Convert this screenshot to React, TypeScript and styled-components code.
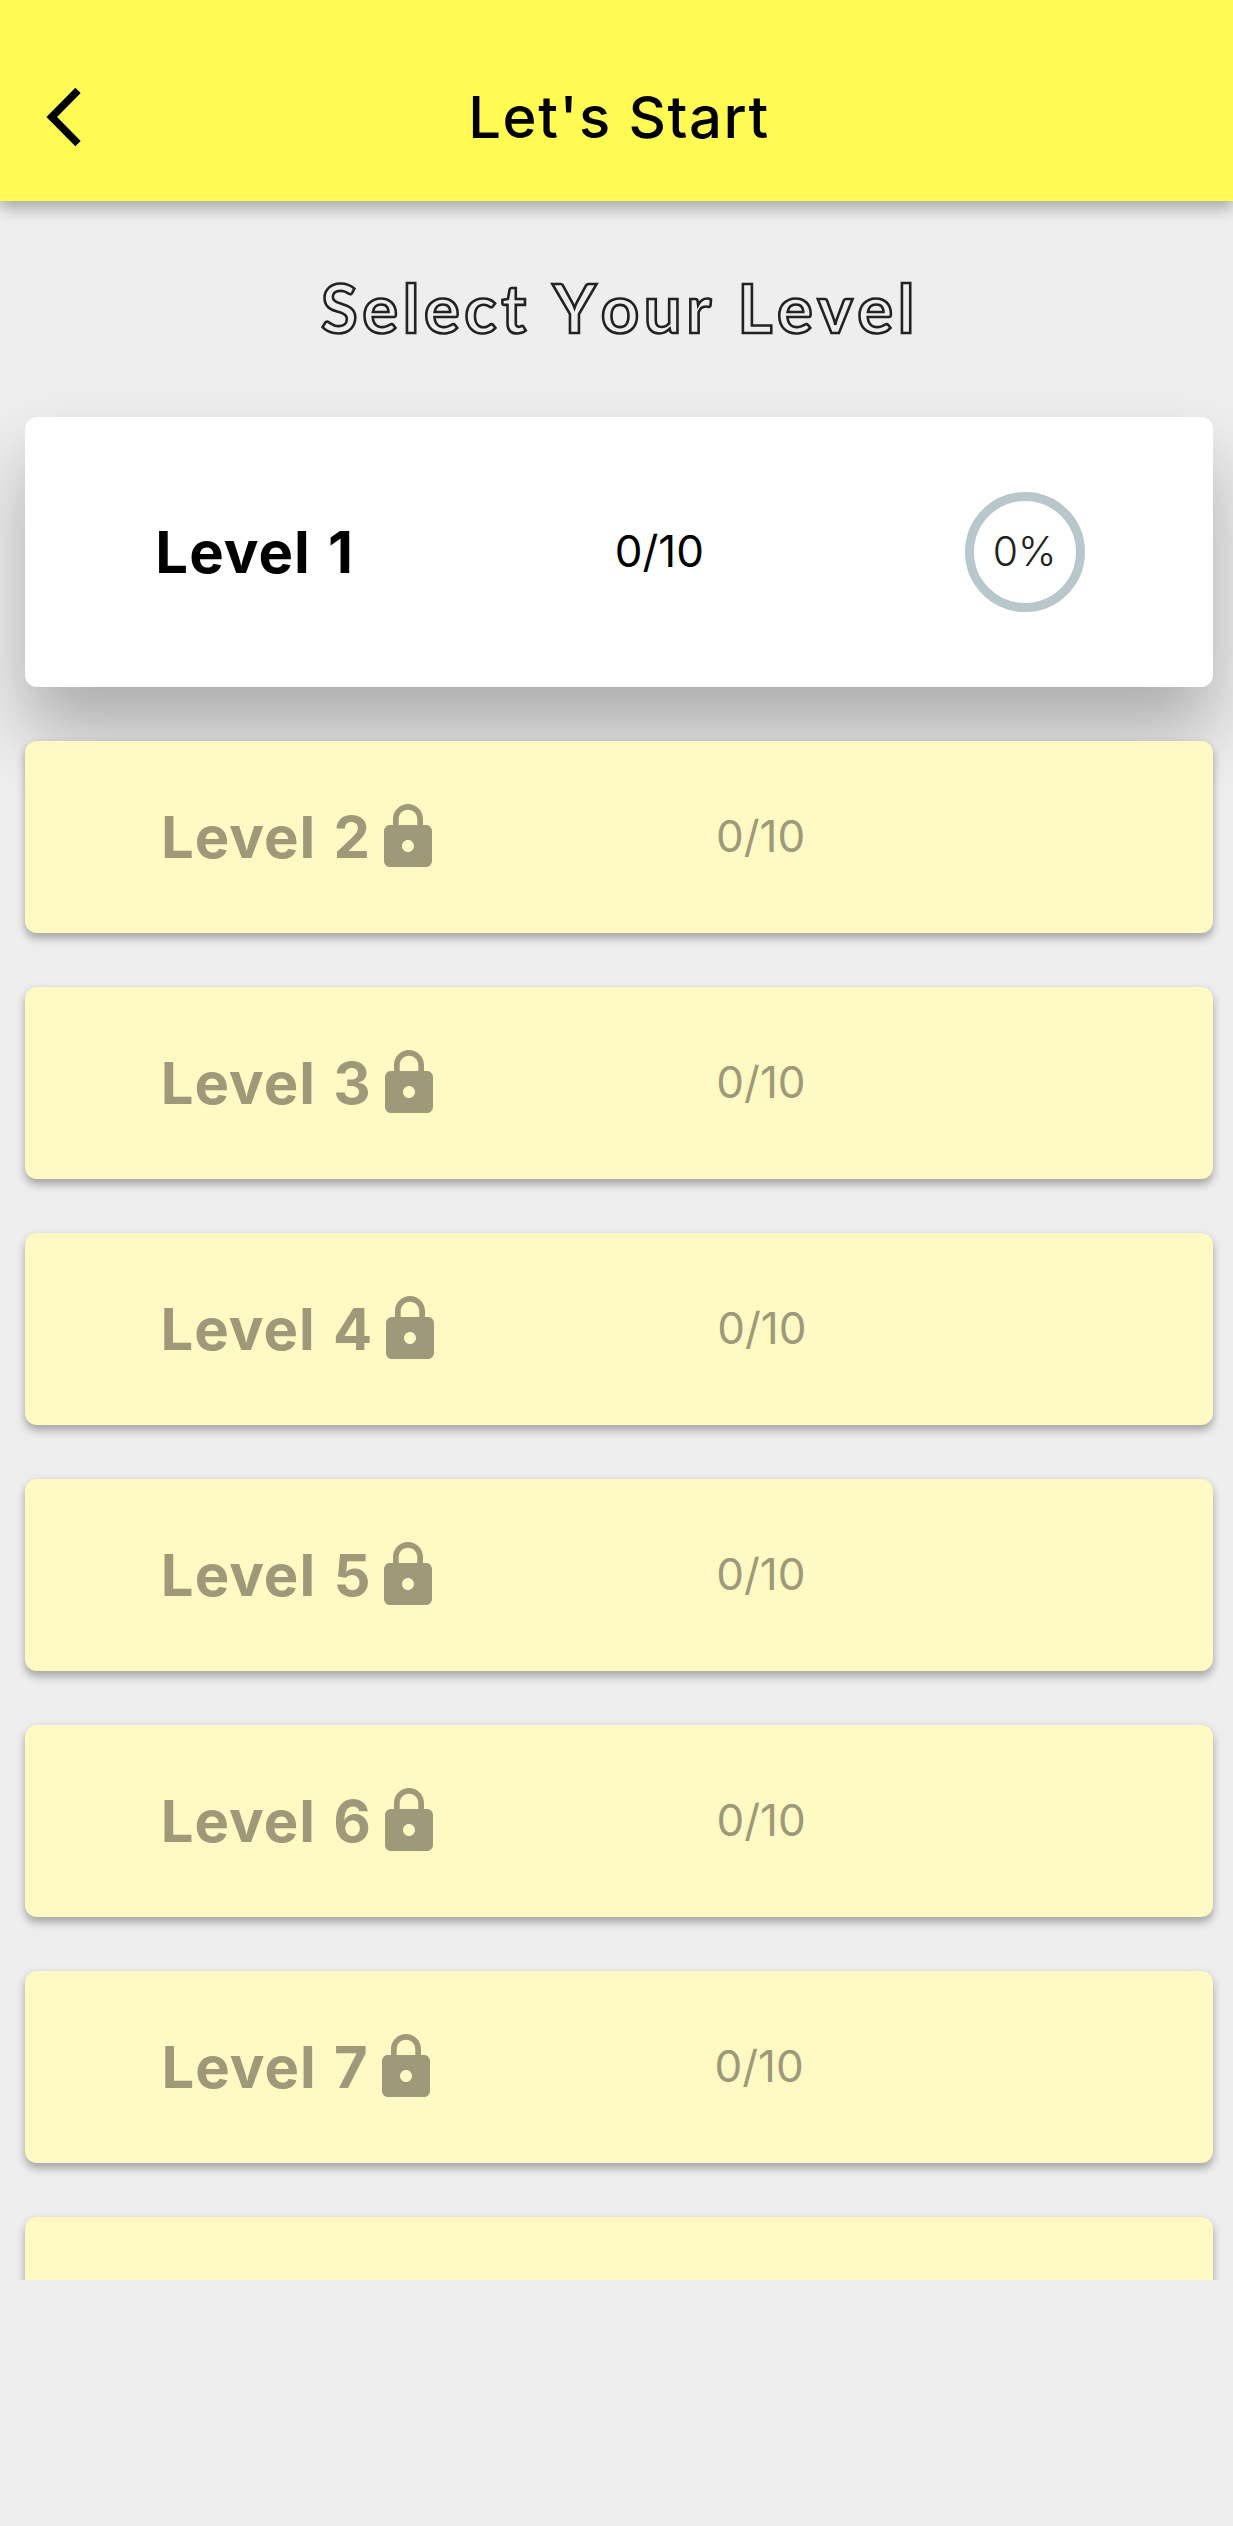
import React from "react";
import styled, { createGlobalStyle } from "styled-components";

const GlobalStyle = createGlobalStyle`
  *, *::before, *::after { box-sizing: border-box; }
  body { margin: 0; background: #eeeeee; font-family: Inter, "Liberation Sans", sans-serif; }
`;

const Screen = styled.div`
  height: 2526px;
  display: flex;
  flex-direction: column;
  overflow: hidden;
  background: #eeeeee;
`;

const AppBar = styled.header`
  flex: none;
  height: 201px;
  padding: 33px 31px 0 36px;
  display: grid;
  grid-template-columns: 60px 1fr 60px;
  align-items: center;
  background: #fffb52;
  box-shadow: 0 8px 14px rgba(0, 0, 0, 0.24), 0 2px 18px rgba(0, 0, 0, 0.08);
`;

const BackButton = styled.button`
  border: 0;
  padding: 0;
  background: none;
  display: flex;
  color: #000;
`;

const Title = styled.h1`
  margin: 0;
  text-align: center;
  font-size: 58px;
  line-height: 70px;
  font-weight: 500;
  letter-spacing: 1.5px;
  color: #000;
`;

const Heading = styled.h2`
  flex: none;
  margin: 0;
  height: 216px;
  padding: 56px 0 0 7px;
  text-align: center;
  font-family: Lato, "Open Sans", sans-serif;
  font-size: 67px;
  line-height: 100px;
  font-weight: 700;
  font-kerning: none;
  letter-spacing: 4.6px;
  word-spacing: 1px;
  color: #eeeeee;
  -webkit-text-stroke: 2.6px #222;
`;

const Levels = styled.main`
  flex: none;
  height: 1863px;
  padding: 0 20px 0 25px;
  display: flex;
  flex-direction: column;
  gap: 54px;
  clip-path: inset(-100px 0 0 0);
`;

const Card = styled.section<{ $open?: boolean }>`
  flex: none;
  height: ${(p) => (p.$open ? 270 : 192)}px;
  display: flex;
  align-items: center;
  justify-content: space-around;
  border-radius: 12px;
  background: ${(p) => (p.$open ? "#ffffff" : "#fff9c4")};
  color: ${(p) => (p.$open ? "#000000" : "#9e9a79")};
  box-shadow: ${(p) =>
    p.$open
      ? "0 44px 72px rgba(0,0,0,0.28)"
      : "0 6px 9px rgba(0,0,0,0.26), 0 1px 10px rgba(0,0,0,0.08)"};
`;

const Name = styled.div`
  display: flex;
  align-items: center;
  gap: 1px;
  font-size: 58px;
  line-height: 70px;
  font-weight: 700;
  letter-spacing: 1px;
  word-spacing: 2.5px;
  white-space: pre;
`;

const Score = styled.div`
  padding-bottom: 2px;
  font-size: 44px;
  line-height: 54px;
`;

const Progress = styled.div`
  display: flex;
`;

const Ring = styled.div`
  width: 120px;
  height: 120px;
  margin-right: -2px;
  border: 9px solid #b8c7cb;
  border-radius: 50%;
  display: flex;
  align-items: center;
  justify-content: center;
  padding-bottom: 2px;
  color: #222;
  font-size: 41px;
  font-weight: 300;
`;

const BackIcon = () => (
  <svg width="60" height="60" viewBox="0 0 60 60" fill="none">
    <path d="M42 3.3 L15.7 30 L42 56.7" stroke="currentColor" strokeWidth="7.5" />
  </svg>
);

const LockIcon = () => (
  <svg width="72" height="72" viewBox="0 0 24 24" fill="currentColor">
    <path d="M18 8h-1V6c0-2.76-2.24-5-5-5S7 3.24 7 6v2H6c-1.1 0-2 .9-2 2v10c0 1.1.9 2 2 2h12c1.1 0 2-.9 2-2V10c0-1.1-.9-2-2-2zm-6 9c-1.1 0-2-.9-2-2s.9-2 2-2 2 .9 2 2-.9 2-2 2zm3.1-9H8.9V6c0-1.71 1.39-3.1 3.1-3.1 1.71 0 3.1 1.39 3.1 3.1v2z" />
  </svg>
);

const lockedLevels = [2, 3, 4, 5, 6, 7, 8];

export default function App() {
  return (
    <Screen>
      <GlobalStyle />
      <AppBar>
        <BackButton aria-label="Back">
          <BackIcon />
        </BackButton>
        <Title>Let's Start</Title>
      </AppBar>
      <Heading>Select Your Level</Heading>
      <Levels>
        <Card $open>
          <Name>Level 1</Name>
          <Score>0/10</Score>
          <Progress>
            <Ring>0%</Ring>
          </Progress>
        </Card>
        {lockedLevels.map((n) => (
          <Card key={n}>
            <Name>
              {`Level ${n}`}
              <LockIcon />
            </Name>
            <Score>0/10</Score>
            <Progress />
          </Card>
        ))}
      </Levels>
    </Screen>
  );
}
